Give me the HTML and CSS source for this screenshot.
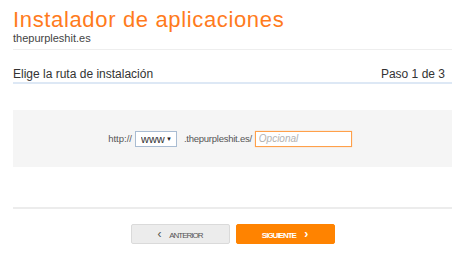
FILE: index.html
```html
<!DOCTYPE html>
<html lang="es">
<head>
    <meta charset="UTF-8">
    <meta name="viewport" content="width=device-width, initial-scale=1.0">
    <title>Instalador de aplicaciones</title>
    <link rel="stylesheet" href="styles.css">
</head>
<body>

<div class="container">
    <div class="header">
        <h1>Instalador de aplicaciones</h1>
        <div class="site">thepurpleshit.es</div>
    </div>

    <div class="step-head">
        <span>Elige la ruta de instalación</span>
        <span>Paso 1 de 3</span>
    </div>

    <div class="path-box">
        <span class="path-text">http://</span>
        <label class="select-wrap">
            <select id="subdomain">
                <option value="www">www</option>
            </select>
        </label>
        <span class="path-text domain">.thepurpleshit.es/</span>
        <input type="text" id="folder" class="folder" placeholder="Opcional">
    </div>

    <div class="actions">
        <button type="button" class="btn btn-prev"><span class="chev">&lsaquo;</span> ANTERIOR</button>
        <button type="button" class="btn btn-next">SIGUIENTE <span class="chev">&rsaquo;</span></button>
    </div>
</div>

</body>
</html>
```

FILE: styles.css
```css
body {
    font-family: "Liberation Sans", Arial, sans-serif;
    background-color: white;
    margin: 0;
    padding: 0;
}

.container {
    width: 439px;
    margin-left: 13px;
}

.header {
    padding-top: 8px;
    padding-bottom: 4px;
    border-bottom: 1px solid #eeeeee;
}

h1 {
    margin: 0;
    font-size: 22px;
    line-height: 24px;
    font-weight: normal;
    letter-spacing: 0.65px;
    color: #ff7b1c;
}

.site {
    font-size: 11px;
    line-height: 13px;
    color: #444;
}

.step-head {
    display: flex;
    justify-content: space-between;
    margin-top: 17px;
    padding-right: 7px;
    padding-bottom: 1px;
    border-bottom: 2px solid #dde8f5;
    font-size: 12px;
    line-height: 14px;
    color: #333;
}

.path-box {
    display: flex;
    align-items: center;
    justify-content: center;
    height: 57px;
    margin-top: 26px;
    padding-right: 5px;
    background-color: #f5f5f5;
    font-size: 9.5px;
    color: #555;
}

.select-wrap {
    position: relative;
    margin-left: 3px;
}

.select-wrap::after {
    content: "\25BC";
    position: absolute;
    right: 5px;
    top: 5px;
    font-size: 6px;
    color: #222;
    pointer-events: none;
}

.select-wrap select {
    appearance: none;
    -webkit-appearance: none;
    width: 42px;
    height: 16px;
    padding: 0 0 0 5px;
    border: 1px solid #a9bcd2;
    border-radius: 0;
    background-color: white;
    font-family: inherit;
    font-size: 11px;
    color: #333;
}

.domain {
    margin-left: 7px;
    letter-spacing: -0.25px;
}

.folder {
    width: 97px;
    height: 16px;
    box-sizing: border-box;
    margin-left: 3px;
    padding: 0 3px;
    border: 1px solid #ffa04a;
    box-shadow: 0 0 1px #ffc58f;
    font-family: inherit;
    font-size: 10px;
    outline: none;
}

.folder::placeholder {
    color: #b2b2b2;
    font-style: italic;
}

.actions {
    display: flex;
    justify-content: center;
    gap: 6px;
    margin-top: 40px;
    padding-top: 15px;
    border-top: 2px solid #ececec;
}

.btn {
    width: 99px;
    height: 20px;
    padding: 0;
    border: 1px solid #dadada;
    border-radius: 2px;
    font-family: inherit;
    font-size: 8px;
    letter-spacing: -1px;
    cursor: pointer;
}

.btn .chev {
    font-size: 12px;
    letter-spacing: 0;
}

.btn-prev {
    background-color: #ececec;
    color: #555;
}

.btn-prev .chev {
    margin-right: 7px;
}

.btn-next {
    background-color: #ff8300;
    border-color: #ff8300;
    color: white;
    font-weight: bold;
}

.btn-next .chev {
    margin-left: 7px;
}
```
